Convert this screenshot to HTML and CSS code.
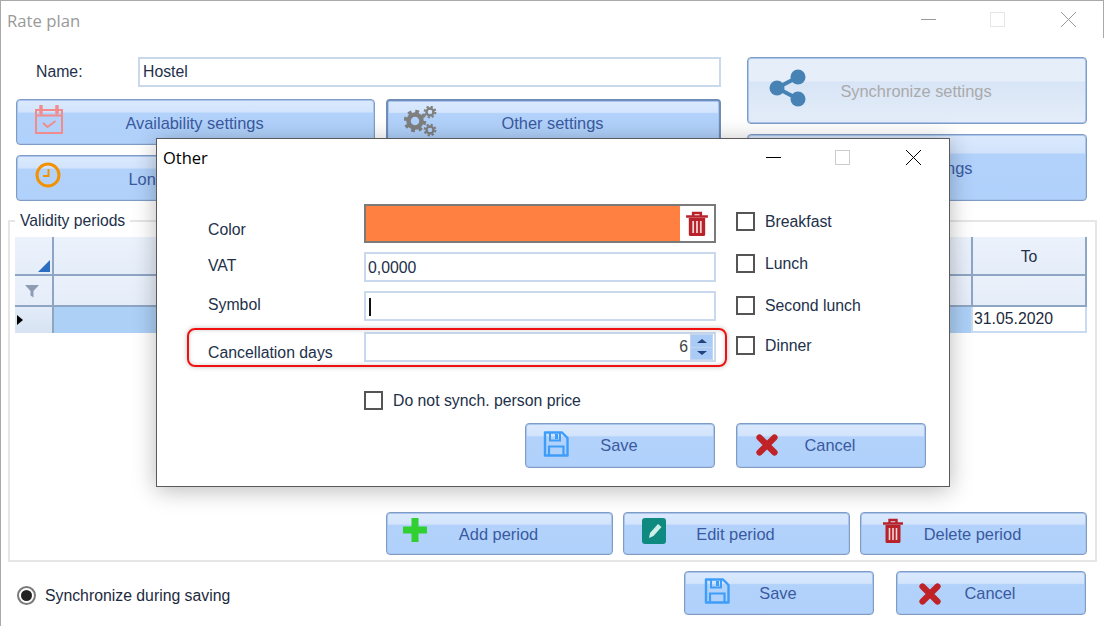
FILE: index.html
```html
<!DOCTYPE html>
<html lang="en">
<head>
<meta charset="utf-8">
<title>Rate plan</title>
<link rel="stylesheet" href="styles.css">
</head>
<body>
<svg class="defs" width="0" height="0" aria-hidden="true">
  <defs>
    <symbol id="i-save" viewBox="0 0 26 26">
      <path d="M2 1.5h17l5.5 5.5v17.500H2z" fill="none" stroke="#3f9dfa" stroke-width="2.400" stroke-linejoin="round"/>
      <path d="M7 2v7.500h10V2" fill="none" stroke="#3f9dfa" stroke-width="2"/>
      <rect x="12" y="3" width="3" height="5" fill="#3f9dfa"/>
      <path d="M6 24.500v-9h14.500v9" fill="none" stroke="#3f9dfa" stroke-width="2.200"/>
    </symbol>
    <symbol id="i-x" viewBox="0 0 22 22">
      <path d="M3.500 3.500l15 15M18.500 3.500l-15 15" fill="none" stroke="#bf2327" stroke-width="6.200" stroke-linecap="round"/>
    </symbol>
    <symbol id="i-trash" viewBox="0 0 22 26" preserveAspectRatio="none">
      <path d="M1 5.500h20M7.500 5V2h7v3" fill="none" stroke="#b8232b" stroke-width="2.400"/>
      <path d="M3.500 7h15v16.500a1.500 1.500 0 0 1-1.500 1.500H5a1.500 1.500 0 0 1-1.500-1.500z" fill="#b8232b"/>
      <path d="M7.500 10v12M11 10v12M14.500 10v12" stroke="#f3d6d6" stroke-width="1.600"/>
    </symbol>
  </defs>
</svg>

<div class="window">
  <header class="titlebar titlebar-main">
    <span class="title title-muted">Rate plan</span>
    <div class="controls controls-muted">
      <span class="ctl"><svg width="15" height="15" viewBox="0 0 15 15"><path d="M0 7.500h15" stroke="#999"/></svg></span>
      <span class="ctl ctl-mid"><svg width="15" height="15" viewBox="0 0 15 15"><rect x=".5" y=".5" width="14" height="14" fill="none" stroke="#e6e6e6"/></svg></span>
      <span class="ctl"><svg width="15" height="15" viewBox="0 0 15 15"><path d="M0 0l15 15M15 0L0 15" stroke="#999"/></svg></span>
    </div>
  </header>

  <section class="top">
    <div class="top-left">
      <div class="name-row">
        <label class="name-label">Name:</label>
        <div class="input input-name">Hostel</div>
      </div>
      <div class="top-buttons">
        <button class="btn">
          <svg class="icon icon-cal" width="28" height="29" viewBox="0 0 28 29">
            <path d="M1 5h26v23H1zM1 10.500h26" fill="none" stroke="#f28b8b" stroke-width="2"/>
            <path d="M6 1v7M22 1v7" stroke="#f28b8b" stroke-width="3.400" stroke-linecap="round"/>
            <path d="M8 18l4.500 4 8-6" fill="none" stroke="#f28b8b" stroke-width="2"/>
          </svg>
          Availability settings
        </button>
        <button class="btn btn-focus">
          <svg class="icon icon-gear" width="33" height="31" viewBox="0 0 33 31">
            <g fill="none" stroke="#7f7f7f">
              <circle cx="11" cy="15" r="6.500" stroke-width="4.500"/>
              <circle cx="11" cy="15" r="9.500" stroke-width="3.500" stroke-dasharray="3.700 3.760"/>
              <circle cx="26" cy="6" r="3.500" stroke-width="2.400"/>
              <circle cx="26" cy="6" r="5.400" stroke-width="2" stroke-dasharray="2.200 2.040"/>
              <circle cx="26" cy="24" r="3.500" stroke-width="2.400"/>
              <circle cx="26" cy="24" r="5.400" stroke-width="2" stroke-dasharray="2.200 2.040"/>
            </g>
          </svg>
          Other settings
        </button>
        <button class="btn">
          <svg class="icon icon-clock" width="26" height="26" viewBox="0 0 26 26">
            <circle cx="13" cy="13" r="11" fill="none" stroke="#f39200" stroke-width="3"/>
            <path d="M13.500 7v7H8" fill="none" stroke="#f39200" stroke-width="2"/>
          </svg>
          Long stay settings
        </button>
        <button class="btn"></button>
      </div>
    </div>
    <div class="top-right">
      <button class="btn btn-disabled">
        <svg class="icon icon-share" width="38" height="38" viewBox="0 0 38 38">
          <path d="M29 8L8 19l21 11" fill="none" stroke="#4682b4" stroke-width="4"/>
          <circle cx="29" cy="8" r="7.500" fill="#4682b4"/>
          <circle cx="8" cy="19" r="7.500" fill="#4682b4"/>
          <circle cx="29" cy="30" r="7.500" fill="#4682b4"/>
        </svg>
        Synchronize settings
      </button>
      <button class="btn btn-wide">Rooms settings</button>
    </div>
  </section>

  <fieldset class="group">
    <legend class="legend">Validity periods</legend>
    <div class="group-inner">
      <div class="grid">
        <div class="cell head corner"><span class="corner-mark"></span></div>
        <div class="cell head"></div>
        <div class="cell head head-to">To</div>
        <div class="cell filter corner-filter">
          <svg width="14" height="14" viewBox="0 0 14 14"><path d="M0 1h14L8.500 7v6.500l-3-2V7z" fill="#8c9db3"/></svg>
        </div>
        <div class="cell filter"></div>
        <div class="cell filter"></div>
        <div class="cell row-head"><span class="row-arrow"></span></div>
        <div class="cell row-sel"></div>
        <div class="cell row-to">31.05.2020</div>
      </div>
      <div class="period-buttons">
        <button class="btn">
          <svg class="icon icon-plus" width="24" height="24" viewBox="0 0 24 24"><path d="M12 0v24M0 12h24" stroke="#2fd02f" stroke-width="7"/></svg>
          Add period
        </button>
        <button class="btn">
          <svg class="icon icon-edit" width="24" height="26" viewBox="0 0 24 26">
            <rect width="24" height="26" rx="3" fill="#0f8a80"/>
            <path d="M7 20l1-5 8-9 3.500 3-8 9z" fill="#cfeeea"/>
          </svg>
          Edit period
        </button>
        <button class="btn">
          <svg class="icon icon-trash"><use href="#i-trash"/></svg>
          Delete period
        </button>
      </div>
    </div>
  </fieldset>

  <footer class="footer">
    <div class="radio-row">
      <span class="radio"><span class="radio-dot"></span></span>
      <span class="radio-text">Synchronize during saving</span>
    </div>
    <div class="footer-buttons">
      <button class="btn">
        <svg class="icon icon-save"><use href="#i-save"/></svg>
        Save
      </button>
      <button class="btn">
        <svg class="icon icon-x"><use href="#i-x"/></svg>
        Cancel
      </button>
    </div>
  </footer>

  <div class="dialog">
    <header class="titlebar titlebar-dialog">
      <span class="title title-dialog">Other</span>
      <div class="controls controls-dialog">
        <span class="ctl"><svg width="15" height="15" viewBox="0 0 15 15"><path d="M0 7.500h15" stroke="#000"/></svg></span>
        <span class="ctl ctl-mid"><svg width="15" height="15" viewBox="0 0 15 15"><rect x=".5" y=".5" width="14" height="14" fill="none" stroke="#ccc"/></svg></span>
        <span class="ctl"><svg width="15" height="15" viewBox="0 0 15 15"><path d="M0 0l15 15M15 0L0 15" stroke="#000"/></svg></span>
      </div>
    </header>
    <div class="form">
      <div class="fields">
        <div class="field field-color">
          <label class="label label-color">Color</label>
          <div class="color-box">
            <span class="swatch"></span>
            <svg class="color-trash"><use href="#i-trash"/></svg>
          </div>
        </div>
        <div class="field">
          <label class="label">VAT</label>
          <div class="input input-field">0,0000</div>
        </div>
        <div class="field">
          <label class="label">Symbol</label>
          <div class="input input-field"><span class="caret"></span></div>
        </div>
        <div class="field field-cancel">
          <label class="label label-cancel">Cancellation days</label>
          <div class="input input-field input-spin">
            <span>6</span>
            <span class="spin">
              <span class="spin-btn"><span class="arrow-up"></span></span>
              <span class="spin-btn"><span class="arrow-down"></span></span>
            </span>
          </div>
        </div>
      </div>
      <div class="meals">
        <div class="check-row"><span class="check"></span>Breakfast</div>
        <div class="check-row"><span class="check"></span>Lunch</div>
        <div class="check-row"><span class="check"></span>Second lunch</div>
        <div class="check-row check-last"><span class="check"></span>Dinner</div>
      </div>
    </div>
    <div class="check-row check-sync"><span class="check"></span>Do not synch. person price</div>
    <div class="dialog-buttons">
      <button class="btn">
        <svg class="icon icon-dsave"><use href="#i-save"/></svg>
        Save
      </button>
      <button class="btn">
        <svg class="icon icon-dx"><use href="#i-x"/></svg>
        Cancel
      </button>
    </div>
    <div class="highlight"></div>
  </div>
</div>
</body>
</html>
```

FILE: styles.css
```css
* { box-sizing: border-box; }
html, body { margin: 0; padding: 0; height: 100%; overflow: hidden; background: #fff; }
body { font-family: "Liberation Sans", Arial, sans-serif; font-size: 15.8px; color: #22304a; }
.defs { position: absolute; }

.window {
  position: relative;
  width: 1104px;
  height: 626px;
  border-top: 1px solid #a9a9a9;
  border-left: 1px solid #a9a9a9;
  padding-left: 7px;
  background: #fff;
}

.titlebar { display: flex; align-items: center; justify-content: space-between; }
.titlebar-main { height: 37px; margin-left: -7px; padding-left: 6px; border-right: 1px solid #a9a9a9; }
.titlebar-dialog { height: 38px; padding-left: 6px; }
.title { font-family: "Open Sans", sans-serif; font-size: 16.5px; color: #000; }
.title-muted { color: #999; font-size: 16.7px; padding-top: 1px; }
.title-dialog { padding-bottom: 2px; }
.controls { display: flex; }
.controls-dialog { margin-top: -2px; padding-right: 1px; }
.ctl { width: 70px; height: 20px; display: flex; align-items: center; justify-content: center; }
.ctl-mid { padding-right: 2px; }

.top {
  display: grid;
  grid-template-columns: 705px 340px;
  column-gap: 26px;
  margin: 19px 0 0 8px;
}
.top-left { display: flex; flex-direction: column; gap: 12px; }
.name-row { display: flex; align-items: center; height: 30px; }
.name-label { width: 122px; padding-left: 20px; }
.input {
  height: 30px;
  border: 2px solid #c9d8ec;
  background: #fff;
  line-height: 26px;
  padding-left: 3px;
}
.input-name { flex: 1; }
.top-buttons { display: grid; grid-template-columns: 359px 335px; grid-auto-rows: 46px; gap: 10px 11px; }
.top-right { display: flex; flex-direction: column; gap: 10px; }
.top-right .btn { height: 67px; }
.btn-wide { width: 342px; }

.btn {
  position: relative;
  display: block;
  width: 100%;
  height: 100%;
  padding: 2px 2px 0 0;
  border: 1px solid #7f9cc4;
  border-radius: 4px;
  box-shadow: inset 0 0 0 1px #a9c6ee;
  background: linear-gradient(#dbe9fd 0, #d2e4fc 27%, #b2d2fb 30%, #b0d1fb 100%);
  font-family: "Liberation Sans", Arial, sans-serif;
  font-size: 16.4px;
  color: #3a5aa0;
  text-align: center;
}
.top-buttons .btn { padding-top: 3px; }
.btn-focus { border: 2px solid #6f8db8; }
.btn-disabled {
  background: linear-gradient(#e6eefa 0, #e6eefa 35%, #d8e5f6 37%, #e4edf9 100%);
  color: #aaa;
}
.icon { position: absolute; }
.icon-cal { left: 18px; top: 5px; }
.icon-gear { left: 16px; top: 5px; }
.icon-clock { left: 18px; top: 6px; }
.icon-share { left: 21px; top: 11px; }
.icon-plus { left: 16px; top: 5px; }
.icon-edit { left: 18px; top: 5px; }
.icon-trash { left: 21px; top: 5px; width: 22px; height: 26px; }
.icon-save { left: 19px; top: 6px; width: 26px; height: 26px; }
.icon-x { left: 22px; top: 11px; width: 22px; height: 22px; }
.icon-dsave { left: 17px; top: 7px; width: 26px; height: 26px; }
.icon-dx { left: 19px; top: 10px; width: 22px; height: 22px; }

.group {
  display: block;
  width: 1089px;
  height: 350px;
  margin: 11px 0 0;
  padding: 0 8px 5px 5px;
  border: 2px solid #e6e6e6;
  min-width: 0;
}
.legend { padding: 0 5px; margin-left: 0; font-size: 15.7px; line-height: 18px; color: #22304a; }
.group-inner { height: 325px; padding-top: 7px; display: flex; flex-direction: column; justify-content: space-between; }

.grid { display: grid; grid-template-columns: 39px 919px 114px; grid-template-rows: 39px 31px 26px; }
.cell { display: flex; align-items: center; }
.head { position: relative; background: linear-gradient(#ebf2fc, #e5edf9); border-right: 2px solid #8ea5c3; border-bottom: 2px solid #8ea5c3; }
.head-to { justify-content: center; padding-top: 2px; }
.corner-mark {
  position: absolute;
  right: 2px;
  bottom: 2px;
  width: 0;
  height: 0;
  border-style: solid;
  border-width: 0 0 12px 12px;
  border-color: transparent transparent #2a6dc1 transparent;
}
.filter { background: linear-gradient(#eaf1fb, #e5edf9); border-right: 2px solid #8ea5c3; border-bottom: 2px solid #8ea5c3; }
.corner-filter { justify-content: center; padding-right: 3px; }
.row-head { background: linear-gradient(#e3ecf8, #d7e3f3); border-right: 2px solid #8ea5c3; padding-left: 2px; }
.row-arrow { width: 0; height: 0; border-style: solid; border-width: 5px 0 5px 6px; border-color: transparent transparent transparent #000; }
.row-sel { background: #add0f7; border-right: 2px solid #c8dbf3; }
.row-to { padding-left: 1px; color: #1d2a3d; border-right: 2px solid #c8dbf3; border-bottom: 2px solid #c8dbf3; }

.period-buttons { display: flex; justify-content: flex-end; gap: 10px; }
.period-buttons .btn { width: 227px; height: 43px; }

.footer { display: flex; justify-content: space-between; margin: 9px 0 0 8px; width: 1070px; height: 44px; }
.radio-row { display: flex; align-items: flex-end; gap: 9px; padding: 0 0 10px 1px; color: #1d2a3d; }
.radio { width: 19px; height: 19px; border: 2px solid #7a7a7a; border-radius: 50%; display: flex; align-items: center; justify-content: center; }
.radio-dot { width: 11px; height: 11px; border-radius: 50%; background: #222; }
.footer-buttons { display: flex; gap: 22px; }
.footer-buttons .btn { width: 190px; height: 44px; padding-top: 0; }

.dialog {
  position: absolute;
  left: 155px;
  top: 137px;
  width: 794px;
  height: 349px;
  border: 1px solid #5a5a5a;
  background: #fff;
  box-shadow: 0 3px 22px rgba(0, 0, 0, .28);
}
.form { display: flex; margin-top: 27px; padding-left: 51px; }
.fields { display: flex; flex-direction: column; gap: 9px; width: 508px; }
.field { display: flex; height: 30px; }
.field-color { height: 39px; }
.field-cancel { margin-top: 2px; }
.label { width: 156px; padding-top: 4px; line-height: 20px; color: #22304a; }
.label-color { padding-top: 16px; }
.label-cancel { padding-top: 11px; }
.input-field { flex: 1; padding-left: 2px; line-height: 28px; }
.color-box { flex: 1; display: flex; align-items: center; border: 2px solid #7a7a7a; background: #fff; }
.swatch { width: 314px; height: 100%; background: #ff8040; }
.color-trash { width: 24px; height: 26px; margin-left: 5px; }
.caret { display: inline-block; width: 2px; height: 18px; background: #111; vertical-align: middle; margin-top: -2px; margin-left: 1px; }
.input-spin { display: flex; justify-content: flex-end; align-items: center; gap: 2px; padding-right: 1px; color: #444; }
.spin { display: flex; flex-direction: column; gap: 1px; width: 23px; height: 26px; padding: 1px; background: #c3d6ee; }
.spin-btn { flex: 1; display: flex; align-items: center; justify-content: center; background: #a9cbf5; }
.arrow-up { width: 0; height: 0; border-style: solid; border-width: 0 5px 4px; border-color: transparent transparent #23417c; }
.arrow-down { width: 0; height: 0; border-style: solid; border-width: 4px 5px 0; border-color: #23417c transparent transparent; }

.meals { display: flex; flex-direction: column; gap: 23px; padding: 8px 0 0 20px; }
.check-row { display: flex; align-items: center; gap: 10px; height: 19px; line-height: 19px; color: #22304a; }
.check { width: 19px; height: 19px; border: 2px solid #555; background: #fff; flex: none; }
.check-last { margin-top: -2px; }
.check-sync { margin: 29px 0 0 207px; }
.dialog-buttons { display: flex; gap: 21px; margin: 13px 0 0 368px; }
.dialog-buttons .btn { width: 190px; height: 45px; padding-top: 0; }

.highlight {
  position: absolute;
  left: 30px;
  top: 189px;
  width: 540px;
  height: 39px;
  border: 2px solid #f01010;
  border-radius: 8px;
  box-shadow: 0 0 5px rgba(0, 0, 0, .25), inset 0 0 4px rgba(0, 0, 0, .2);
  pointer-events: none;
}
```
